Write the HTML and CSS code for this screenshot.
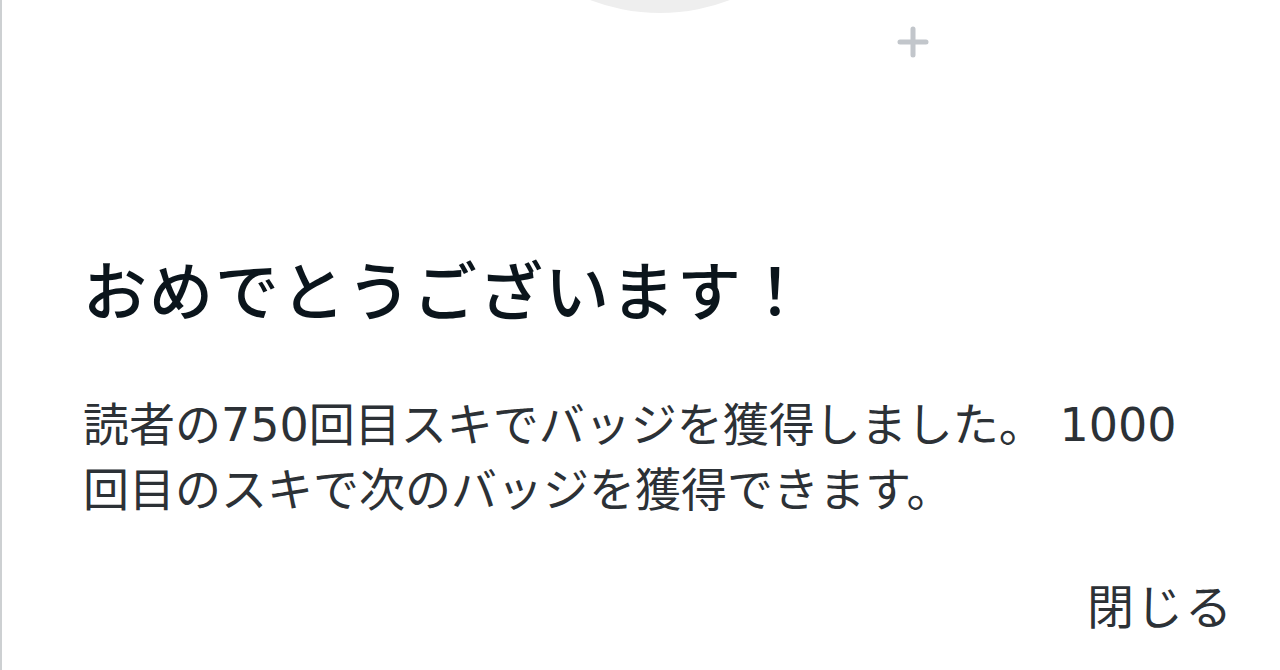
FILE: index.html
```html
<!DOCTYPE html>
<html lang="ja">
<head>
<meta charset="utf-8">
<title>バッジ獲得</title>
<link rel="stylesheet" href="styles.css">
</head>
<body>
<div class="modal">
  <div class="badge-area">
    <div class="badge-circle"></div>
    <svg class="sparkle" width="32" height="32" viewBox="0 0 32 32" aria-hidden="true">
      <path d="M16 3 V29 M3 16 H29" stroke="#c2c6cb" stroke-width="5" stroke-linecap="round" fill="none"/>
    </svg>
  </div>
  <h1 class="title">おめでとうございます！</h1>
  <p class="message">読者の750回目スキでバッジを獲得しました。 1000回目のスキで次のバッジを獲得できます。</p>
  <div class="actions">
    <button class="close-btn" type="button">閉じる</button>
  </div>
</div>
</body>
</html>
```

FILE: styles.css
```css
html, body {
  margin: 0;
  padding: 0;
  background: #ffffff;
}

body {
  font-family: "DejaVu Sans", "Noto Sans CJK JP", sans-serif;
  width: 1280px;
  height: 670px;
  overflow: hidden;
}

.modal {
  position: relative;
  box-sizing: border-box;
  height: 670px;
  border-left: 2px solid #cdd0d2;
  background: #ffffff;
  overflow: hidden;
  display: flex;
  flex-direction: column;
}

.badge-area {
  position: relative;
  height: 247px;
  flex: none;
}

.badge-circle {
  position: absolute;
  left: 463px;
  top: -377px;
  width: 390px;
  height: 390px;
  border-radius: 50%;
  background: #eeeeee;
}

.sparkle {
  position: absolute;
  left: 895px;
  top: 26px;
}

.title {
  margin: 0;
  padding: 0 78px 0 81px;
  font-family: "Noto Sans CJK JP", sans-serif;
  font-size: 64px;
  font-weight: 500;
  letter-spacing: 2px;
  line-height: 80px;
  color: #0b151c;
}

.message {
  margin: 66px 0 0 0;
  padding: 0 78px 0 81px;
  font-size: 46px;
  line-height: 65px;
  color: #2c3136;
  font-weight: 400;
}

.actions {
  display: flex;
  justify-content: flex-end;
  padding: 0 46px 0 81px;
  margin-top: 48px;
}

.close-btn {
  border: none;
  background: transparent;
  padding: 0;
  font-family: "Noto Sans CJK JP", sans-serif;
  font-size: 47px;
  letter-spacing: 2px;
  line-height: 65px;
  color: #2c3136;
  cursor: pointer;
}
```
